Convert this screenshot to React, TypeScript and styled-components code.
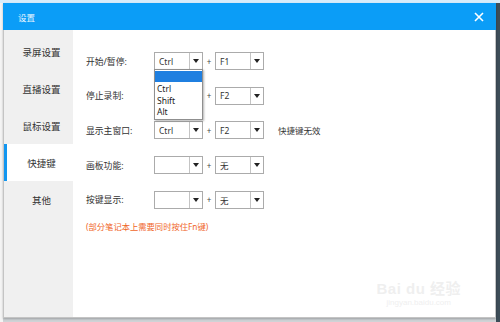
import React, { FC } from 'react';
import styled, { createGlobalStyle } from 'styled-components';

const GlobalStyle = createGlobalStyle`
  html, body {
    margin: 0;
    padding: 0;
    background: #cfd3d6;
  }
  #root {
    width: 500px;
    height: 322px;
    overflow: hidden;
  }
`;

const FONT = `"Noto Sans", "Noto Sans CJK SC", sans-serif`;

const Page = styled.div`
  position: relative;
  width: 500px;
  height: 322px;
  padding: 3px 4px 4px 3px;
  box-sizing: border-box;
  background:
    linear-gradient(to bottom, #d8ecfb 0 3px, transparent 3px),
    linear-gradient(to right, #f4f4f4 0 3px, #cfd3d6 3px 496px, #3d4d58 496px);
  font-family: ${FONT};
`;

const Window = styled.div`
  display: flex;
  flex-direction: column;
  width: 493px;
  height: 315px;
  background: #fff;
  border: 1px solid #c4c4c4;
  border-top: none;
  box-sizing: border-box;
  box-shadow: 0 1px 2px rgba(0, 0, 0, 0.25);
`;

const TitleBar = styled.div`
  display: flex;
  align-items: center;
  justify-content: space-between;
  height: 27px;
  margin: 0 -1px;
  padding: 0 12px 0 15px;
  background: #0b9df7;
  color: #eaf6ff;
  font-size: 8.5px;
`;

const CloseIcon = styled.svg`
  width: 10px;
  height: 10px;
`;

const Main = styled.div`
  display: flex;
  flex: 1;
  min-height: 0;
`;

const Sidebar = styled.div`
  display: flex;
  flex-direction: column;
  width: 69px;
  background: #f0f0f0;
  padding-top: 3px;
`;

const Tab = styled.div<{ $active?: boolean }>`
  display: flex;
  align-items: center;
  justify-content: center;
  height: 37px;
  padding-left: 3px;
  box-sizing: border-box;
  font-size: 9.5px;
  color: #333;
  background: ${(p) => (p.$active ? '#fff' : 'transparent')};
  border-left: 3px solid ${(p) => (p.$active ? '#1296f0' : 'transparent')};
`;

const Content = styled.div`
  position: relative;
  flex: 1;
  padding: 22px 0 0 13px;
`;

const Rows = styled.div`
  display: grid;
  grid-auto-rows: 18px;
  row-gap: 16.7px;
`;

const Row = styled.div`
  display: flex;
  align-items: center;
`;

const Label = styled.div`
  width: 68px;
  font-size: 8.8px;
  color: #333;
`;

const SelectBox = styled.div`
  position: relative;
  display: flex;
  width: 49px;
  height: 18px;
  box-sizing: border-box;
  border: 1px solid #ababab;
  background: #fff;
`;

const SelectValue = styled.div`
  flex: 1;
  display: flex;
  align-items: center;
  padding-left: 4px;
  font-size: 8.5px;
  color: #333;
`;

const ArrowPart = styled.div`
  display: flex;
  align-items: center;
  justify-content: center;
  width: 12px;
  border-left: 1px solid #c4c4c4;
`;

const Arrow = styled.div`
  width: 0;
  height: 0;
  border-left: 3.5px solid transparent;
  border-right: 3.5px solid transparent;
  border-top: 4px solid #222;
`;

const Plus = styled.div`
  width: 12px;
  text-align: center;
  font-size: 8px;
  color: #444;
`;

const Hint = styled.div`
  margin-left: 14px;
  font-size: 8.5px;
  color: #333;
`;

const Note = styled.div`
  margin-top: 11px;
  font-size: 8.3px;
  color: #f0662a;
`;

const Dropdown = styled.div`
  position: absolute;
  top: 16px;
  left: -1px;
  width: 49px;
  padding: 1px 0 1px;
  box-sizing: border-box;
  background: #fff;
  border: 1px solid #8f8f8f;
  box-shadow: 1px 1px 2px rgba(0, 0, 0, 0.3);
  z-index: 2;
`;

const Option = styled.div<{ $selected?: boolean }>`
  height: ${(p) => (p.$selected ? '10.5px' : '11.5px')};
  margin-bottom: ${(p) => (p.$selected ? '1.5px' : '0')};
  padding-left: 2px;
  display: flex;
  align-items: center;
  font-size: 8.5px;
  color: #222;
  background: ${(p) => (p.$selected ? '#1f7fe0' : 'transparent')};
`;

const Watermark = styled.div`
  position: absolute;
  right: 34px;
  bottom: 10px;
  display: flex;
  flex-direction: column;
  align-items: center;
  color: #efefef;
  font-family: "Liberation Sans", "Noto Sans CJK SC", sans-serif;
  pointer-events: none;
`;

const WatermarkBig = styled.div`
  font-size: 15px;
  font-weight: bold;
  letter-spacing: 0.5px;
`;

const WatermarkSmall = styled.div`
  font-size: 8px;
`;

const Select: FC<{ value?: string; children?: React.ReactNode }> = ({ value, children }) => (
  <SelectBox>
    <SelectValue>{value}</SelectValue>
    <ArrowPart>
      <Arrow />
    </ArrowPart>
    {children}
  </SelectBox>
);

const tabs = ['录屏设置', '直播设置', '鼠标设置', '快捷键', '其他'];

// the second row's modifier select sits under the open dropdown, so its value is hidden
const rows = [
  { label: '开始/暂停:', mod: 'Ctrl', key: 'F1', open: true },
  { label: '停止录制:', mod: '', key: 'F2' },
  { label: '显示主窗口:', mod: 'Ctrl', key: 'F2', hint: '快捷键无效' },
  { label: '画板功能:', mod: '', key: '无' },
  { label: '按键显示:', mod: '', key: '无' },
];

export default function App() {
  return (
    <>
      <GlobalStyle />
      <Page>
        <Window>
          <TitleBar>
            <span>设置</span>
            <CloseIcon viewBox="0 0 10 10">
              <path d="M1 1 L9 9 M9 1 L1 9" stroke="#fff" strokeWidth="1.6" />
            </CloseIcon>
          </TitleBar>
          <Main>
            <Sidebar>
              {tabs.map((t) => (
                <Tab key={t} $active={t === '快捷键'}>
                  {t}
                </Tab>
              ))}
            </Sidebar>
            <Content>
              <Rows>
                {rows.map((r) => (
                  <Row key={r.label}>
                    <Label>{r.label}</Label>
                    <Select value={r.mod}>
                      {r.open && (
                        <Dropdown>
                          <Option $selected />
                          <Option>Ctrl</Option>
                          <Option>Shift</Option>
                          <Option>Alt</Option>
                        </Dropdown>
                      )}
                    </Select>
                    <Plus>+</Plus>
                    <Select value={r.key} />
                    {r.hint && <Hint>{r.hint}</Hint>}
                  </Row>
                ))}
              </Rows>
              <Note>(部分笔记本上需要同时按住Fn键)</Note>
              <Watermark>
                <WatermarkBig>Bai du 经验</WatermarkBig>
                <WatermarkSmall>jingyan.baidu.com</WatermarkSmall>
              </Watermark>
            </Content>
          </Main>
        </Window>
      </Page>
    </>
  );
}
